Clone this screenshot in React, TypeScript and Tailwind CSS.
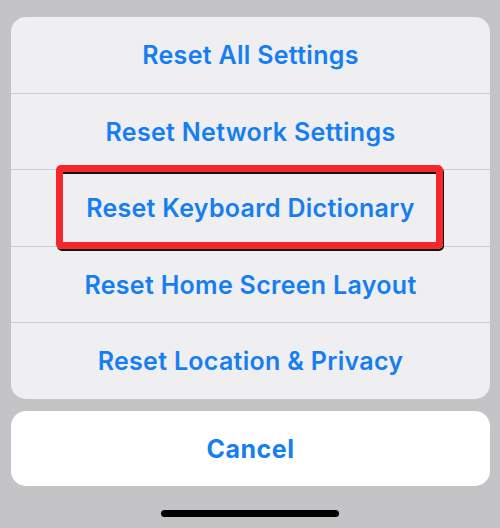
import React from 'react'

const items = [
  'Reset All Settings',
  'Reset Network Settings',
  'Reset Keyboard Dictionary',
  'Reset Home Screen Layout',
  'Reset Location & Privacy',
]

export default function App() {
  return (
    <div
      className="flex h-[528px] w-[500px] flex-col bg-[#c4c4c6] px-[11px] pt-[17px]"
      style={{ fontFamily: 'Inter, "Noto Sans", sans-serif' }}
    >
      {/* Action sheet */}
      <div className="flex h-[382px] w-[479px] flex-col rounded-[15px] bg-[#efeff1]">
        {items.map((label, i) => (
          <div
            key={label}
            className={`relative flex flex-1 items-center justify-center pt-[2px] ${
              i < items.length - 1 ? 'border-b border-[#cdcdd0]' : ''
            }`}
          >
            <span className="text-[25px] font-[560] tracking-[0.3px] text-[#167ef3]">{label}</span>
            {i === 2 && (
              <div className="absolute -top-[5px] left-[45px] h-[84px] w-[387px] rounded-[5px] border-[7px] border-[#f7262d] shadow-[1px_2px_0_#111,inset_0_2px_0_#111]" />
            )}
          </div>
        ))}
      </div>

      {/* Cancel */}
      <div className="mt-[12px] flex h-[75px] w-[479px] items-center justify-center rounded-[15px] bg-white pt-[2px]">
        <span className="text-[25px] font-bold tracking-[0.5px] text-[#167ef3]">Cancel</span>
      </div>

      {/* Home indicator */}
      <div className="mt-[24px] flex justify-center">
        <div className="h-[7px] w-[178px] rounded-full bg-black" />
      </div>
    </div>
  )
}
